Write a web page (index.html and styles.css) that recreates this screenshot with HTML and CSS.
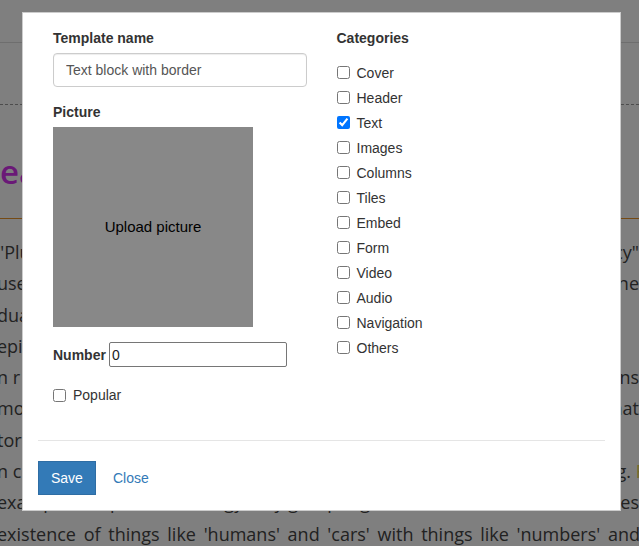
FILE: index.html
```html
<!DOCTYPE html>
<html lang="en">
<head>
<meta charset="utf-8">
<title>Template</title>
<link rel="stylesheet" href="styles.css">
</head>
<body>
<div class="page">
  <header class="topbar"></header>
  <div class="rule-dashed"></div>
  <h1 class="title">eas about categories of being</h1>
  <div class="rule-orange"></div>
  <div class="article">
    <p class="line"><span class="l">"Pluralism" is the view that there are many kinds of entity</span><span class="r">cy"</span></p>
    <p class="line"><span class="l">used to describe the world, and that these are combined</span><span class="r">ine</span></p>
    <p class="line"><span class="l">dualism and monism are special cases of this position</span><span class="r"></span></p>
    <p class="line"><span class="l">epistemology and metaphysics are closely related</span><span class="r"></span></p>
    <p class="line"><span class="l">n r various traditions, the question of categories</span><span class="r">ons</span></p>
    <p class="line"><span class="l">mon to all of them is the attempt to give a systematic</span><span class="r">nat</span></p>
    <p class="line"><span class="l">tor of the most general kinds of things</span><span class="r"></span></p>
    <p class="line"><span class="l">n c the basis of such a scheme one may classify everythin</span><span class="r cut">g. <span class="hl">F</span></span></p>
    <p class="line"><span class="l">example, a top-level ontology may group together the</span><span class="r">es</span></p>
    <p class="line-full">existence of things like 'humans' and 'cars' with things like 'numbers' and</p>
  </div>
</div>

<div class="backdrop"></div>

<div class="modal">
  <div class="cols">
    <div class="col">
      <label class="lbl">Template name</label>
      <input class="text-input" type="text" value="Text block with border">
      <label class="lbl lbl-picture">Picture</label>
      <div class="picture">Upload picture</div>
      <div class="number-row">
        <label class="lbl-inline">Number</label>
        <input class="num-input" type="text" value="0">
      </div>
      <label class="check popular"><input type="checkbox"><span>Popular</span></label>
    </div>
    <div class="col">
      <label class="lbl">Categories</label>
      <div class="cat-list">
        <label class="check"><input type="checkbox"><span>Cover</span></label>
        <label class="check"><input type="checkbox"><span>Header</span></label>
        <label class="check"><input type="checkbox" checked><span>Text</span></label>
        <label class="check"><input type="checkbox"><span>Images</span></label>
        <label class="check"><input type="checkbox"><span>Columns</span></label>
        <label class="check"><input type="checkbox"><span>Tiles</span></label>
        <label class="check"><input type="checkbox"><span>Embed</span></label>
        <label class="check"><input type="checkbox"><span>Form</span></label>
        <label class="check"><input type="checkbox"><span>Video</span></label>
        <label class="check"><input type="checkbox"><span>Audio</span></label>
        <label class="check"><input type="checkbox"><span>Navigation</span></label>
        <label class="check"><input type="checkbox"><span>Others</span></label>
      </div>
    </div>
  </div>
  <div class="sep"></div>
  <div class="actions">
    <button class="btn btn-primary" type="button">Save</button>
    <button class="btn btn-link" type="button">Close</button>
  </div>
</div>
</body>
</html>
```

FILE: styles.css
```css
* { box-sizing: border-box; }

html, body {
  margin: 0;
  padding: 0;
}

body {
  width: 639px;
  height: 546px;
  overflow: hidden;
  position: relative;
  background: #fff;
  font-family: "Open Sans", "DejaVu Sans", sans-serif;
  color: #444;
}

/* ---------- background page ---------- */
.page {
  width: 639px;
}

.topbar {
  height: 43px;
  border-bottom: 1px solid #dcdcdc;
}

.rule-dashed {
  margin-top: 61px;
  border-top: 1px dashed #999;
}

.title {
  margin: 47px 0 0;
  font-size: 33px;
  line-height: 40px;
  font-weight: 600;
  color: #d433ee;
  white-space: nowrap;
  overflow: hidden;
}

.rule-orange {
  margin-top: 26px;
  border-top: 1px solid #ea9428;
}

.article {
  margin-top: 18px;
  margin-left: -3px;
  width: 642px;
  font-size: 18px;
  line-height: 31.3px;
}

.line {
  display: flex;
  margin: 0;
  white-space: nowrap;
}

.line .l {
  flex: 1;
  min-width: 0;
  overflow: hidden;
}

.line .r {
  flex: none;
}

.line .cut {
  margin-right: -6px;
}

.line-full {
  margin: 0;
  width: 643px;
  text-align: justify;
  text-align-last: justify;
  white-space: normal;
}

.hl {
  color: #e6d24a;
}

.backdrop {
  position: fixed;
  inset: 0;
  background: rgba(0, 0, 0, 0.5);
}

/* ---------- modal ---------- */
.modal {
  position: absolute;
  left: 22px;
  top: 12px;
  width: 599px;
  background: #fff;
  border: 1px solid rgba(0, 0, 0, 0.2);
  padding: 15px;
  font-family: "Liberation Sans", Arial, sans-serif;
  font-size: 14px;
  line-height: 20px;
  color: #333;
}

.cols {
  display: grid;
  grid-template-columns: 1fr 1fr;
}

.col {
  display: flex;
  flex-direction: column;
  align-items: flex-start;
  padding: 0 15px;
}

.lbl {
  display: block;
  font-weight: bold;
  margin-bottom: 5px;
}

.lbl-picture {
  margin-top: 15px;
}

.text-input {
  width: 100%;
  height: 34px;
  padding: 6px 12px;
  border: 1px solid #ccc;
  border-radius: 4px;
  font-family: "Liberation Sans", Arial, sans-serif;
  font-size: 14px;
  color: #555;
  box-shadow: inset 0 1px 1px rgba(0, 0, 0, 0.075);
}

.picture {
  width: 200px;
  height: 200px;
  background: #888;
  color: #000;
  font-size: 15px;
  display: flex;
  align-items: center;
  justify-content: center;
}

.number-row {
  display: flex;
  align-items: center;
  gap: 3px;
  height: 25px;
  margin-top: 15px;
}

.lbl-inline {
  font-weight: bold;
}

.num-input {
  width: 178px;
  height: 25px;
  padding: 1px 2px;
  border: 1px solid #767676;
  border-radius: 2px;
  font-family: "Liberation Sans", Arial, sans-serif;
  font-size: 14px;
  color: #222;
}

.check {
  display: flex;
  align-items: center;
  gap: 7px;
  height: 25px;
  font-weight: normal;
}

.check input {
  width: 13px;
  height: 13px;
  margin: 0;
}

.popular {
  margin-top: 18px;
  height: 20px;
}

.cat-list {
  margin-top: 7px;
}

.sep {
  margin: 35px 0 20px;
  border-top: 1px solid #e5e5e5;
}

.actions {
  display: flex;
  gap: 4px;
}

.btn {
  font-family: "Liberation Sans", Arial, sans-serif;
  font-size: 14px;
  line-height: 20px;
  padding: 6px 12px;
  border: 1px solid transparent;
  border-radius: 0;
  background: none;
  cursor: pointer;
}

.btn-primary {
  background: #337ab7;
  border-color: #2e6da4;
  color: #fff;
}

.btn-link {
  color: #337ab7;
}
```
